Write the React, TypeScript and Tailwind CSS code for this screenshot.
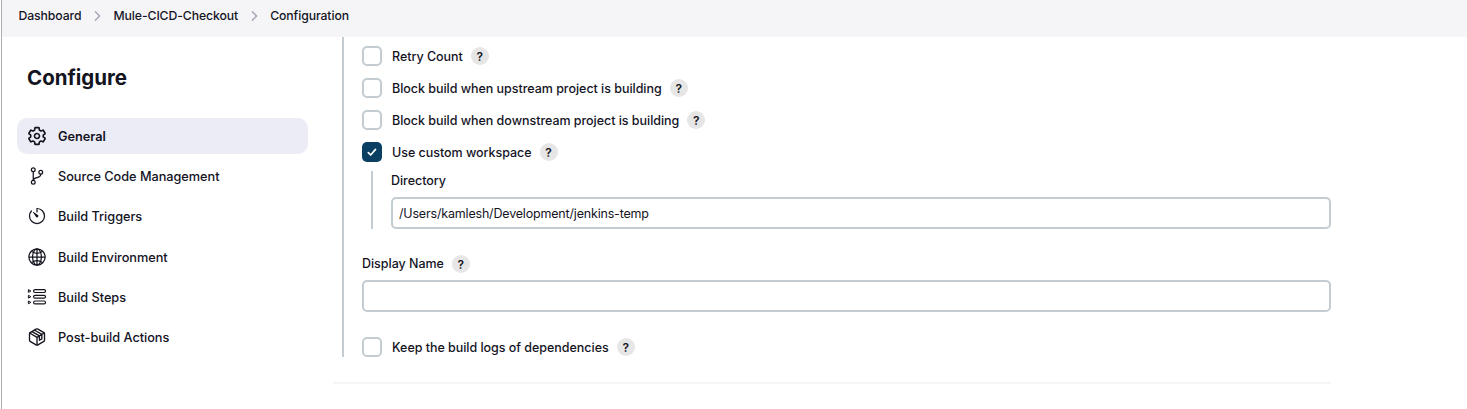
import { ReactNode } from "react";
import {
  IoGitBranchOutline,
  IoGlobeOutline,
  IoSettingsOutline,
  IoTimerOutline,
} from "react-icons/io5";

function StepsIcon() {
  return (
    <svg viewBox="0 0 20 20" className="size-5" fill="none" stroke="currentColor" strokeWidth="1.2" strokeLinejoin="round">
      <rect x="6.6" y="2.6" width="11.9" height="2.9" rx="1.45" />
      <rect x="6.6" y="8.3" width="11.9" height="2.9" rx="1.45" />
      <rect x="6.6" y="14" width="11.9" height="2.9" rx="1.45" />
      <path strokeWidth="1" d="M1.4 2.6v2.8l2.5-1.4zM1.4 8.3v2.8l2.5-1.4zM1.4 14v2.8l2.5-1.4z" />
    </svg>
  );
}

function PackageIcon() {
  return (
    <svg viewBox="0 0 512 512" className="size-5" fill="none" stroke="currentColor" strokeWidth="34" strokeLinecap="round" strokeLinejoin="round">
      <path d="M448 341.37V170.61A32 32 0 00432.11 143l-152-88.46a47.94 47.94 0 00-48.24 0L79.89 143A32 32 0 0064 170.61v170.76A32 32 0 0079.89 369l152 88.46a48 48 0 0048.24 0l152-88.46A32 32 0 00448 341.37z" />
      <path d="M69 153.99l187 110 187-110M256 463.99v-200M130 118l188 110v112l62-36V190L196 82" />
    </svg>
  );
}

function Chevron() {
  return (
    <svg viewBox="0 0 8 12" className="mb-px h-[10px] w-[7px] shrink-0 text-[#a4a4b4]" fill="none" stroke="currentColor" strokeWidth="1.7" strokeLinecap="round" strokeLinejoin="round">
      <path d="M1.5 1l5 5-5 5" />
    </svg>
  );
}

function Help() {
  return (
    <button className="flex size-[18px] shrink-0 items-center justify-center rounded-full bg-[#e6e6e6] pt-px text-[12px] leading-none font-semibold">
      ?
    </button>
  );
}

function Check({ label, checked = false }: { label: string; checked?: boolean }) {
  return (
    <div className="flex h-5 items-center">
      {checked ? (
        <span className="flex size-5 shrink-0 items-center justify-center rounded-[5px] bg-[#0b3f62]">
          <svg viewBox="0 0 20 20" className="size-5" fill="none" stroke="#fff" strokeWidth="1.7" strokeLinecap="round" strokeLinejoin="round">
            <path d="M6.3 10.6l2.4 2.4 4.8-5.6" />
          </svg>
        </span>
      ) : (
        <span className="size-5 shrink-0 rounded-[5px] border-2 border-[#c3ccd1]" />
      )}
      <span className="mr-2 ml-[10px] pt-[1.5px] leading-[18px] whitespace-nowrap">{label}</span>
      <Help />
    </div>
  );
}

function NavItem({ icon, label, active = false }: { icon: ReactNode; label: string; active?: boolean }) {
  return (
    <a className={active ? "flex h-9 items-center gap-[11px] rounded-[10px] bg-[#ececf6] pl-[10px] font-semibold" : "flex h-9 items-center gap-[11px] rounded-[10px] pl-[10px]"}>
      {icon}
      <span className="pt-px">{label}</span>
    </a>
  );
}

export default function App() {
  return (
    <div className="ml-px flex h-[409px] flex-col overflow-hidden border-l border-[#adadb2] bg-white font-['Inter',sans-serif] text-[12.5px] font-medium tracking-[-0.03px] text-[#14141f]">
      <header className="flex h-[37px] shrink-0 items-center gap-[12.5px] bg-[#f5f5f8] pb-[4px] pl-[16.5px] text-[12.25px] tracking-[-0.1px]">
        <span>Dashboard</span>
        <Chevron />
        <span>Mule-CICD-Checkout</span>
        <Chevron />
        <span>Configuration</span>
      </header>
      <div className="flex min-h-0 flex-1">
        <aside className="w-[306px] shrink-0 pl-[15px]">
          <h1 className="mt-[26px] pl-[10px] text-[20.5px] leading-[30px] font-bold">Configure</h1>
          <nav className="mt-[25px] flex flex-col gap-[4.2px] text-[12.75px] tracking-[-0.04px]">
            <NavItem active icon={<IoSettingsOutline className="size-5 [&_path]:stroke-[42px]" />} label="General" />
            <NavItem icon={<IoGitBranchOutline className="size-5" />} label="Source Code Management" />
            <NavItem icon={<IoTimerOutline className="size-5" />} label="Build Triggers" />
            <NavItem icon={<IoGlobeOutline className="size-5" />} label="Build Environment" />
            <NavItem icon={<StepsIcon />} label="Build Steps" />
            <NavItem icon={<PackageIcon />} label="Post-build Actions" />
          </nav>
        </aside>
        <main className="ml-[25px] w-[998px]">
          <section className="ml-[9px] h-[320px] w-[989px] border-l-2 border-[#c3ccd1] pt-[9px] pl-[18px]">
            <div className="flex flex-col gap-3">
              <Check label="Retry Count" />
              <Check label="Block build when upstream project is building" />
              <Check label="Block build when downstream project is building" />
              <Check label="Use custom workspace" checked />
            </div>
            <div className="mt-[9px] ml-[9px] h-[58px] border-l-2 border-[#c3ccd1] pl-[18px]">
              <div className="leading-5">Directory</div>
              <div className="mt-[6px] flex h-8 items-center rounded-[5px] border-2 border-[#c3ccd1] pt-[2px] pl-[6px] font-normal tracking-[-0.18px]">
                /Users/kamlesh/Development/jenkins-temp
              </div>
            </div>
            <div className="mt-[25px] flex h-5 items-center gap-2">
              <span>Display Name</span>
              <Help />
            </div>
            <div className="mt-[6px] mb-[25px] h-8 rounded-[5px] border-2 border-[#c3ccd1]" />
            <Check label="Keep the build logs of dependencies" />
          </section>
          <div className="mt-[25px] h-[2px] bg-[#f5f5f8]" />
        </main>
      </div>
    </div>
  );
}
